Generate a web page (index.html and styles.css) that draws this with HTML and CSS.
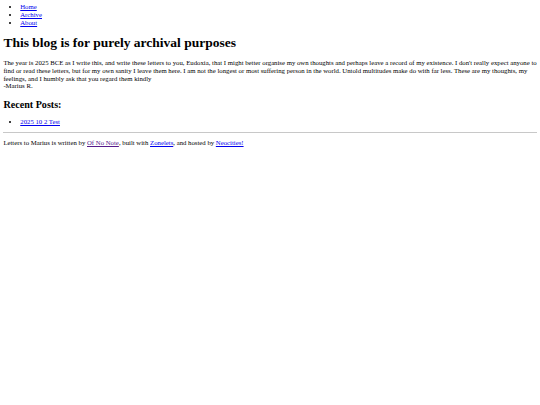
FILE: index.html
```html
<!DOCTYPE html>
<html>
<head>
<meta charset="utf-8">
<title>Letters to Marius</title>
<link rel="stylesheet" href="styles.css">
</head>
<body class="page">
<header class="site-header">
  <nav>
    <ul class="nav-list">
      <li><a href="#">Home</a></li>
      <li><a href="#">Archive</a></li>
      <li><a href="#">About</a></li>
    </ul>
  </nav>
</header>
<main class="content">
  <h1 class="title">This blog is for purely archival purposes</h1>
  <p class="intro">The year is 2025 BCE as I write this, and write these letters to you, Eudoxia, that I might better organise my own thoughts and perhaps leave a record of my existence. I don't really expect anyone to find or read these letters, but for my own sanity I leave them here. I am not the longest or most suffering person in the world. Untold multitudes make do with far less. These are my thoughts, my feelings, and I humbly ask that you regard them kindly<br>-Marius R.</p>
  <h2 class="subtitle">Recent Posts:</h2>
  <ul class="post-list">
    <li><a href="#">2025 10 2 Test</a></li>
  </ul>
</main>
<footer class="site-footer">
  <hr class="rule">
  <p class="credits">Letters to Marius is written by <a class="visited" href="#">Of No Note</a>, built with <a href="#">Zonelets</a>, and hosted by <a href="#">Neocities!</a></p>
</footer>
</body>
</html>
```
FILE: styles.css
```css
html {
  background: #fff;
}
.page {
  margin: 3.375px;
  font-family: "Liberation Serif", "Times New Roman", serif;
  font-size: 6.75px;
  line-height: 7.76px;
  color: #000;
}
a {
  color: #0000ee;
  text-decoration-thickness: 0.5px;
}
a.visited {
  color: #551a8b;
}
.nav-list,
.post-list {
  margin: 6.75px 0;
  padding-left: 16.875px;
  list-style: disc;
}
.site-header .nav-list {
  margin-top: 0;
}
.title {
  font-size: 13.5px;
  line-height: 15.5px;
  margin: 8.5px 0;
  font-weight: bold;
}
.intro,
.credits {
  margin: 6.75px 0;
}
.intro {
  margin-top: 7.25px;
}
.subtitle {
  font-size: 10.125px;
  line-height: 11.64px;
  margin: 8.9px 0 7.25px;
  font-weight: bold;
}
.post-list {
  margin: 6.25px 0;
}
.rule {
  margin: 3.9px 0 3px;
  border: 0;
  border-top: 1px solid #c8c8c8;
  height: 0;
}
.credits {
  margin-top: 6.25px;
}
```
